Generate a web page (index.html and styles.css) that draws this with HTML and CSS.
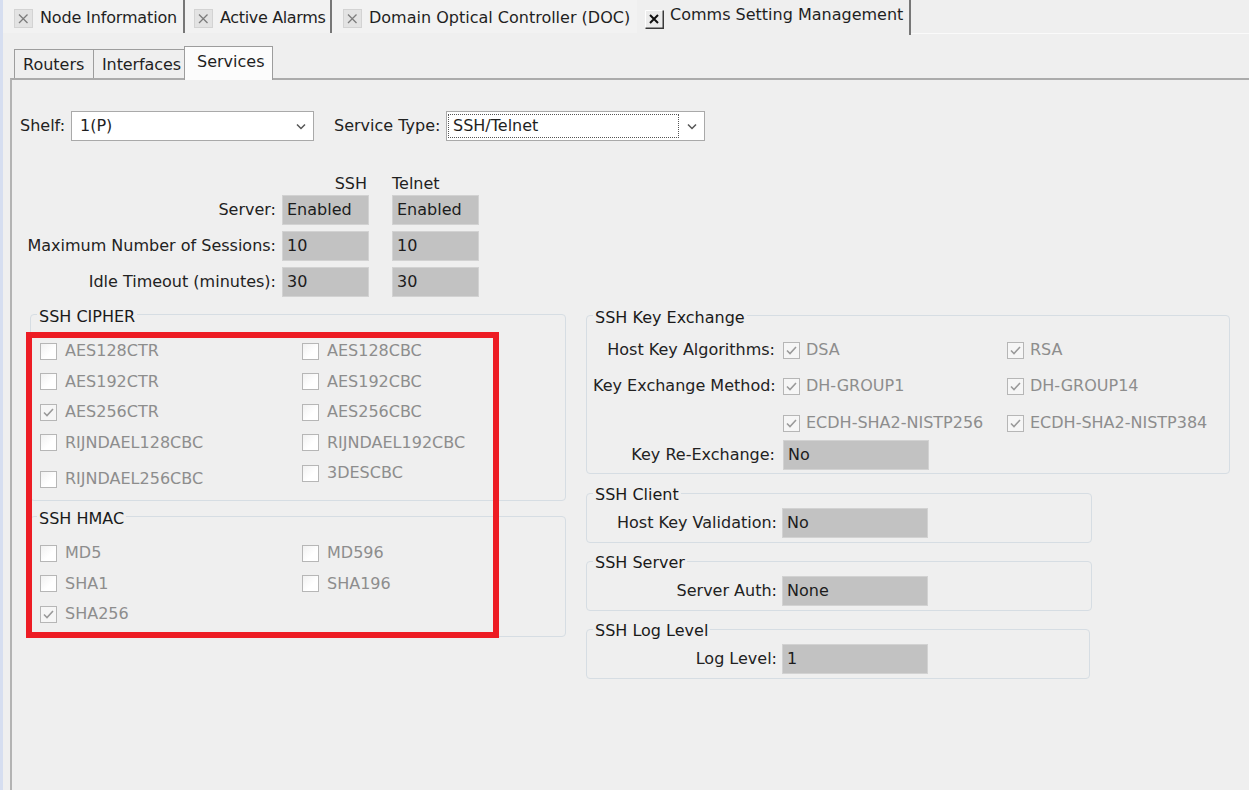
FILE: index.html
```html
<!DOCTYPE html>
<html>
<head>
<meta charset="utf-8">
<title>Comms Setting Management</title>
<link rel="stylesheet" href="styles.css">
</head>
<body>
<div class="app">
  <div class="edge"></div>
  <div class="main">
    <div class="doctabs">
      <div class="doctab t1">
        <span class="xbtn"><svg width="19" height="19" viewBox="0 0 19 19"><rect x="0.5" y="0.5" width="18" height="18" fill="#e3e3e3" stroke="#d3d3d3"/><path d="M5 5.5 L13.5 14 M13.5 5.5 L5 14" stroke="#7c7c7c" stroke-width="1.3" fill="none"/></svg></span>
        <span class="dt-label">Node Information</span>
      </div>
      <div class="doctab t2">
        <span class="xbtn"><svg width="19" height="19" viewBox="0 0 19 19"><rect x="0.5" y="0.5" width="18" height="18" fill="#e3e3e3" stroke="#d3d3d3"/><path d="M5 5.5 L13.5 14 M13.5 5.5 L5 14" stroke="#7c7c7c" stroke-width="1.3" fill="none"/></svg></span>
        <span class="dt-label">Active Alarms</span>
      </div>
      <div class="doctab t3">
        <span class="xbtn"><svg width="19" height="19" viewBox="0 0 19 19"><rect x="0.5" y="0.5" width="18" height="18" fill="#e3e3e3" stroke="#d3d3d3"/><path d="M5 5.5 L13.5 14 M13.5 5.5 L5 14" stroke="#7c7c7c" stroke-width="1.3" fill="none"/></svg></span>
        <span class="dt-label">Domain Optical Controller (DOC)</span>
      </div>
      <div class="doctab t4 active">
        <span class="xbtn"><svg width="19" height="19" viewBox="0 0 19 19"><rect x="0" y="0" width="19" height="19" fill="#ececec"/><path d="M0.5 18 V0.5 H18" stroke="#ffffff" fill="none"/><path d="M18.25 0.5 V18.25 H0.5" stroke="#3a3a3a" stroke-width="1.5" fill="none"/><path d="M5 5 L13 13 M13 5 L5 13" stroke="#111" stroke-width="2" fill="none"/></svg></span>
        <span class="dt-label">Comms Setting Management</span>
      </div>
      <div class="doctab-fill"></div>
    </div>

    <div class="workspace">
      <div class="subtabs">
        <div class="subtab routers">Routers</div>
        <div class="subtab interfaces">Interfaces</div>
        <div class="subtab services active">Services</div>
      </div>

      <div class="panel">
        <div class="selrow">
          <span class="lbl-shelf">Shelf:</span>
          <div class="combo shelf">
            <span class="combo-text">1(P)</span>
            <svg class="chev" width="10" height="7" viewBox="0 0 10 7"><path d="M1 1.5 L5 5.5 L9 1.5" stroke="#555" stroke-width="1.5" fill="none"/></svg>
          </div>
          <span class="lbl-stype">Service Type:</span>
          <div class="combo stype">
            <span class="focus">SSH/Telnet</span>
            <svg class="chev" width="10" height="7" viewBox="0 0 10 7"><path d="M1 1.5 L5 5.5 L9 1.5" stroke="#555" stroke-width="1.5" fill="none"/></svg>
          </div>
        </div>

        <div class="svc-grid">
          <span></span>
          <span class="col-h ssh">SSH</span>
          <span class="col-h telnet">Telnet</span>

          <span class="g-label">Server:</span>
          <span class="fld">Enabled</span>
          <span class="fld">Enabled</span>

          <span class="g-label">Maximum Number of Sessions:</span>
          <span class="fld">10</span>
          <span class="fld">10</span>

          <span class="g-label">Idle Timeout (minutes):</span>
          <span class="fld">30</span>
          <span class="fld">30</span>
        </div>

        <div class="groups">
          <div class="col-left">
            <div class="group cipher">
              <div class="group-title">SSH CIPHER</div>
              <div class="cb-cols">
                <div class="cb-col first">
                  <div class="cb"><span class="cb-box"></span><span>AES128CTR</span></div>
                  <div class="cb"><span class="cb-box"></span><span>AES192CTR</span></div>
                  <div class="cb"><span class="cb-box on"><svg width="13" height="13" viewBox="0 0 13 13"><path d="M2 6.5 L5 9.5 L11 3" fill="none" stroke="#9a9a9a" stroke-width="1.6"/></svg></span><span>AES256CTR</span></div>
                  <div class="cb"><span class="cb-box"></span><span>RIJNDAEL128CBC</span></div>
                  <div class="cb drop-l"><span class="cb-box"></span><span>RIJNDAEL256CBC</span></div>
                </div>
                <div class="cb-col">
                  <div class="cb"><span class="cb-box"></span><span>AES128CBC</span></div>
                  <div class="cb"><span class="cb-box"></span><span>AES192CBC</span></div>
                  <div class="cb"><span class="cb-box"></span><span>AES256CBC</span></div>
                  <div class="cb"><span class="cb-box"></span><span>RIJNDAEL192CBC</span></div>
                  <div class="cb drop-r"><span class="cb-box"></span><span>3DESCBC</span></div>
                </div>
              </div>
            </div>

            <div class="group hmac">
              <div class="group-title">SSH HMAC</div>
              <div class="cb-cols">
                <div class="cb-col first">
                  <div class="cb"><span class="cb-box"></span><span>MD5</span></div>
                  <div class="cb"><span class="cb-box"></span><span>SHA1</span></div>
                  <div class="cb"><span class="cb-box on"><svg width="13" height="13" viewBox="0 0 13 13"><path d="M2 6.5 L5 9.5 L11 3" fill="none" stroke="#9a9a9a" stroke-width="1.6"/></svg></span><span>SHA256</span></div>
                </div>
                <div class="cb-col">
                  <div class="cb"><span class="cb-box"></span><span>MD596</span></div>
                  <div class="cb"><span class="cb-box"></span><span>SHA196</span></div>
                </div>
              </div>
            </div>
          </div>

          <div class="col-right">
            <div class="group kex">
              <div class="group-title">SSH Key Exchange</div>
              <div class="kx-row r1">
                <span class="kx-label">Host Key Algorithms:</span>
                <div class="cb kx-a"><span class="cb-box on"><svg width="13" height="13" viewBox="0 0 13 13"><path d="M2 6.5 L5 9.5 L11 3" fill="none" stroke="#9a9a9a" stroke-width="1.6"/></svg></span><span>DSA</span></div>
                <div class="cb"><span class="cb-box on"><svg width="13" height="13" viewBox="0 0 13 13"><path d="M2 6.5 L5 9.5 L11 3" fill="none" stroke="#9a9a9a" stroke-width="1.6"/></svg></span><span>RSA</span></div>
              </div>
              <div class="kx-row r2">
                <span class="kx-label">Key Exchange Method:</span>
                <div class="cb kx-a"><span class="cb-box on"><svg width="13" height="13" viewBox="0 0 13 13"><path d="M2 6.5 L5 9.5 L11 3" fill="none" stroke="#9a9a9a" stroke-width="1.6"/></svg></span><span>DH-GROUP1</span></div>
                <div class="cb"><span class="cb-box on"><svg width="13" height="13" viewBox="0 0 13 13"><path d="M2 6.5 L5 9.5 L11 3" fill="none" stroke="#9a9a9a" stroke-width="1.6"/></svg></span><span>DH-GROUP14</span></div>
              </div>
              <div class="kx-row r3">
                <span class="kx-label"></span>
                <div class="cb kx-a"><span class="cb-box on"><svg width="13" height="13" viewBox="0 0 13 13"><path d="M2 6.5 L5 9.5 L11 3" fill="none" stroke="#9a9a9a" stroke-width="1.6"/></svg></span><span>ECDH-SHA2-NISTP256</span></div>
                <div class="cb"><span class="cb-box on"><svg width="13" height="13" viewBox="0 0 13 13"><path d="M2 6.5 L5 9.5 L11 3" fill="none" stroke="#9a9a9a" stroke-width="1.6"/></svg></span><span>ECDH-SHA2-NISTP384</span></div>
              </div>
              <div class="kx-row r4">
                <span class="kx-label">Key Re-Exchange:</span>
                <span class="fld wide">No</span>
              </div>
            </div>

            <div class="group small client">
              <div class="group-title">SSH Client</div>
              <div class="sg-row">
                <span class="sg-label">Host Key Validation:</span>
                <span class="fld wide">No</span>
              </div>
            </div>

            <div class="group small server">
              <div class="group-title">SSH Server</div>
              <div class="sg-row">
                <span class="sg-label">Server Auth:</span>
                <span class="fld wide">None</span>
              </div>
            </div>

            <div class="group small loglevel">
              <div class="group-title">SSH Log Level</div>
              <div class="sg-row">
                <span class="sg-label">Log Level:</span>
                <span class="fld wide">1</span>
              </div>
            </div>
          </div>
        </div>
      </div>
    </div>
  </div>
</div>
<div class="highlight"></div>
</body>
</html>
```

FILE: styles.css
```css
* { box-sizing: border-box; }

html, body { margin: 0; padding: 0; }

body {
  width: 1249px;
  height: 790px;
  overflow: hidden;
  background: #efefef;
  font-family: "DejaVu Sans", "Liberation Sans", sans-serif;
  font-size: 16px;
  line-height: 18px;
  color: #222;
}

.app { display: flex; height: 790px; }

.edge { width: 3px; flex: none; background: #d6def0; }

.main { flex: 1; min-width: 0; display: flex; flex-direction: column; }

/* ---------- document tabs ---------- */
.doctabs { display: flex; height: 35px; flex: none; }

.doctab {
  display: flex;
  align-items: center;
  gap: 7px;
  height: 33px;
  padding-top: 2px;
  white-space: nowrap;
  background: #f2f2f2;
  color: #1f1f1f;
}
.doctab .xbtn { display: flex; flex: none; margin-top: 2px; }
.doctab.t1 { width: 182px; padding-left: 11px; border-right: 2px solid #777; letter-spacing: -0.15px; }
.doctab.t2 { width: 147px; padding-left: 9px; border-right: 2px solid #777; letter-spacing: -0.35px; }
.doctab.t3 { width: 305px; padding-left: 11px; }
.doctab.t4 {
  width: 274px;
  height: 35px;
  padding-left: 8px;
  gap: 6px;
  background: #efefef;
  border-right: 2px solid #777;
}
.doctab.t4 .dt-label { margin-bottom: 8px; }
.doctab-fill { flex: 1; height: 34px; border-bottom: 1px solid #fafafa; }

/* ---------- sub tabs ---------- */
.workspace { flex: 1; display: flex; flex-direction: column; padding-left: 7px; }

.subtabs {
  display: flex;
  align-items: flex-end;
  height: 32px;
  margin-top: 11px;
  padding-left: 4px;
  flex: none;
}
.subtab {
  height: 29px;
  border: 1px solid #9d9d9d;
  border-bottom: none;
  padding-top: 6px;
  padding-left: 8px;
  white-space: nowrap;
  color: #1f1f1f;
  background: #efefef;
}
.subtab.routers { width: 80px; }
.subtab.interfaces { width: 92px; margin-left: -1px; letter-spacing: -0.1px; }
.subtab.services {
  width: 89px;
  margin-left: -1px;
  padding-left: 12px;
  padding-top: 6px;
  height: 34px;
  margin-bottom: -2px;
  background: #fcfcfc;
  position: relative;
  z-index: 1;
}

/* ---------- panel ---------- */
.panel {
  flex: 1;
  border-top: 2px solid #ababab;
  border-left: 2px solid #b3b3b3;
  padding: 31px 0 0 8px;
}

.selrow { display: flex; align-items: center; height: 30px; }
.lbl-shelf { width: 51px; }
.lbl-stype { width: 112px; margin-left: 20px; }

.combo {
  height: 30px;
  background: #fff;
  border: 1px solid #a9a9a9;
  display: flex;
  align-items: center;
  color: #1f1f1f;
}
.combo .chev { margin-left: auto; flex: none; }
.combo.shelf { width: 243px; padding-left: 8px; padding-right: 7px; }
.combo.stype { width: 259px; padding-left: 1px; padding-right: 7px; }
.combo .focus {
  width: 231px;
  height: 24px;
  border: 1px dotted #555;
  padding-left: 4px;
  line-height: 22px;
}

.svc-grid {
  display: grid;
  grid-template-columns: 262px 110px 87px;
  grid-template-rows: 20px 36px 36px 30px;
  margin-top: 34px;
}
.col-h { color: #1f1f1f; }
.col-h.ssh { width: 87px; text-align: right; padding-right: 2px; }
.g-label { text-align: right; padding-right: 6px; height: 30px; line-height: 30px; }

.fld {
  display: block;
  width: 87px;
  height: 30px;
  background: #c2c2c2;
  border: 1px solid #d2d2d2;
  padding-left: 4px;
  line-height: 28px;
  color: #1c1c1c;
}
.fld.wide { width: 146px; }

/* ---------- groups ---------- */
.groups { display: flex; gap: 20px; margin-top: 17px; padding-left: 10px; }
.col-left { width: 536px; display: flex; flex-direction: column; }
.col-right { width: 644px; display: flex; flex-direction: column; margin-top: 1px; }

.group {
  border: 1px solid #d6dde3;
  border-radius: 4px;
  padding: 0 6px;
}
.group-title {
  display: table;
  margin-top: -7px;
  padding: 0 2px;
  background: #efefef;
  color: #1a1a1a;
  line-height: 18px;
}

.cb-cols { display: flex; margin-top: 10px; padding-left: 3px; }
.cb-col { display: flex; flex-direction: column; }
.cb-col.first { width: 262px; }

.cb {
  display: flex;
  align-items: center;
  gap: 8px;
  height: 30.5px;
  color: #8d8d8d;
  white-space: nowrap;
}
.cb.drop-l { margin-top: 6px; }
.cb.drop-r { margin-top: 0; }

.cb-box {
  width: 17px;
  height: 17px;
  flex: none;
  border: 1px solid #b6b6b6;
  background: linear-gradient(135deg, #f1f1f1, #ffffff 60%);
  display: flex;
  align-items: center;
  justify-content: center;
}
.cb-box.on { background: #f6f6f6; }

.group.cipher { padding-bottom: 5.5px; }
.group.hmac { margin-top: 15px; padding-bottom: 6px; }

.kx-row { display: flex; align-items: center; height: 30px; }
.kx-row.r1 { margin-top: 8px; }
.kx-row.r2 { margin-top: 6px; }
.kx-row.r3 { margin-top: 7px; }
.kx-row.r4 { margin-top: 2px; }
.kx-label { width: 190px; flex: none; text-align: right; padding-right: 8px; white-space: nowrap; }
.kx-row .cb { gap: 6px; height: 30px; }
.kx-a { width: 224px; flex: none; }
.group.kex { padding-bottom: 3px; }

.group.small { width: 506px; padding-bottom: 4px; }
.group.small .group-title { margin-top: -8px; }
.group.client { margin-top: 19px; }
.group.server { margin-top: 18px; }
.group.loglevel { margin-top: 18px; width: 504px; }
.sg-row { display: flex; align-items: center; height: 30px; margin-top: 4px; }
.sg-label { width: 189px; flex: none; text-align: right; padding-right: 5px; white-space: nowrap; }

/* annotation */
.highlight {
  position: absolute;
  left: 26px;
  top: 332px;
  width: 473px;
  height: 306px;
  border: 6px solid #ed1c24;
}
```
